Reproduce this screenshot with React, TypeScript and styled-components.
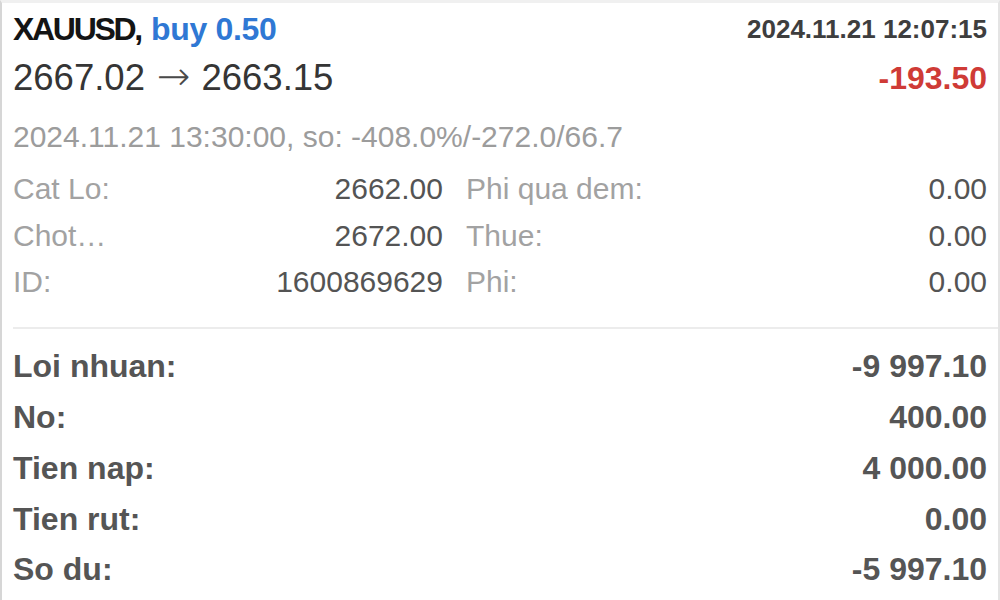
import React from "react";
import styled, { createGlobalStyle } from "styled-components";

const GlobalStyle = createGlobalStyle`
  html, body {
    margin: 0;
    padding: 0;
    background: #ffffff;
  }
  body {
    font-family: "Liberation Sans", Arial, Helvetica, sans-serif;
    -webkit-font-smoothing: antialiased;
  }
`;

const Card = styled.div`
  box-sizing: border-box;
  width: 1000px;
  height: 600px;
  overflow: hidden;
  background: #ffffff;
  border-top: 3px solid #f0f0f0;
  border-left: 2px solid #d6d6d6;
  border-right: 2px solid #e4e4e4;
  padding: 0 11px;
  display: flex;
  flex-direction: column;
`;

const Line = styled.div<{ $h: number; $mt?: number }>`
  display: flex;
  align-items: center;
  justify-content: space-between;
  height: ${(p) => p.$h}px;
  margin-top: ${(p) => p.$mt ?? 0}px;
  white-space: nowrap;
`;

const Symbol = styled.span`
  font-weight: 700;
  font-size: 32px;
  color: #141414;
`;

const SymbolName = styled.span`
  letter-spacing: -2.3px;
  margin-right: 10px;
`;

const Side = styled.span`
  color: #2f78d4;
  letter-spacing: -0.3px;
`;

const OpenDate = styled.span`
  font-weight: 700;
  font-size: 26px;
  color: #3e3e3e;
`;

const Prices = styled.span`
  display: inline-flex;
  align-items: center;
  font-size: 36.5px;
  color: #353535;
`;

const Arrow = styled.span`
  display: inline-block;
  margin: 0 11px 0 12px;
  font-family: "DejaVu Sans", sans-serif;
  font-weight: 200;
  font-size: 40px;
  line-height: 1;
  color: #4a4a4a;
  position: relative;
  top: -2px;
`;

const Profit = styled.span`
  font-weight: 700;
  font-size: 32px;
  color: #cf3b36;
`;

const Meta = styled.div`
  margin-top: 14px;
  height: 44px;
  line-height: 44px;
  font-size: 30px;
  color: #9c9c9c;
  white-space: nowrap;
`;

const Details = styled.div`
  margin-top: 7px;
  display: grid;
  grid-template-columns: 430px 1fr;
  column-gap: 23px;
`;

const DetailRow = styled.div`
  display: flex;
  align-items: center;
  justify-content: space-between;
  height: 46.5px;
  font-size: 30px;
  white-space: nowrap;
`;

const DetailLabel = styled.span`
  color: #a2a2a2;
`;

const DetailValue = styled.span`
  color: #545454;
`;

const Separator = styled.div`
  margin: 21px -11px 0 0;
  height: 2px;
  background: #ececec;
`;

const Summary = styled.div`
  margin-top: 13px;
  display: flex;
  flex-direction: column;
`;

const SummaryRow = styled.div`
  display: flex;
  align-items: center;
  justify-content: space-between;
  height: 50.75px;
  font-weight: 700;
  font-size: 32px;
  color: #555555;
  white-space: nowrap;
`;

const details: [string, string][] = [
  ["Cat Lo:", "2662.00"],
  ["Phi qua dem:", "0.00"],
  ["Chot…", "2672.00"],
  ["Thue:", "0.00"],
  ["ID:", "1600869629"],
  ["Phi:", "0.00"],
];

const summary: [string, string][] = [
  ["Loi nhuan:", "-9 997.10"],
  ["No:", "400.00"],
  ["Tien nap:", "4 000.00"],
  ["Tien rut:", "0.00"],
  ["So du:", "-5 997.10"],
];

export default function App() {
  return (
    <>
      <GlobalStyle />
      <Card>
        <Line $h={52}>
          <Symbol>
            <SymbolName>XAUUSD,</SymbolName>
            <Side>buy 0.50</Side>
          </Symbol>
          <OpenDate>2024.11.21 12:07:15</OpenDate>
        </Line>
        <Line $h={46}>
          <Prices>
            <span>2667.02</span>
            <Arrow>→</Arrow>
            <span>2663.15</span>
          </Prices>
          <Profit>-193.50</Profit>
        </Line>
        <Meta>2024.11.21 13:30:00, so: -408.0%/-272.0/66.7</Meta>
        <Details>
          {details.map(([label, value]) => (
            <DetailRow key={label}>
              <DetailLabel>{label}</DetailLabel>
              <DetailValue>{value}</DetailValue>
            </DetailRow>
          ))}
        </Details>
        <Separator />
        <Summary>
          {summary.map(([label, value]) => (
            <SummaryRow key={label}>
              <span>{label}</span>
              <span>{value}</span>
            </SummaryRow>
          ))}
        </Summary>
      </Card>
    </>
  );
}
